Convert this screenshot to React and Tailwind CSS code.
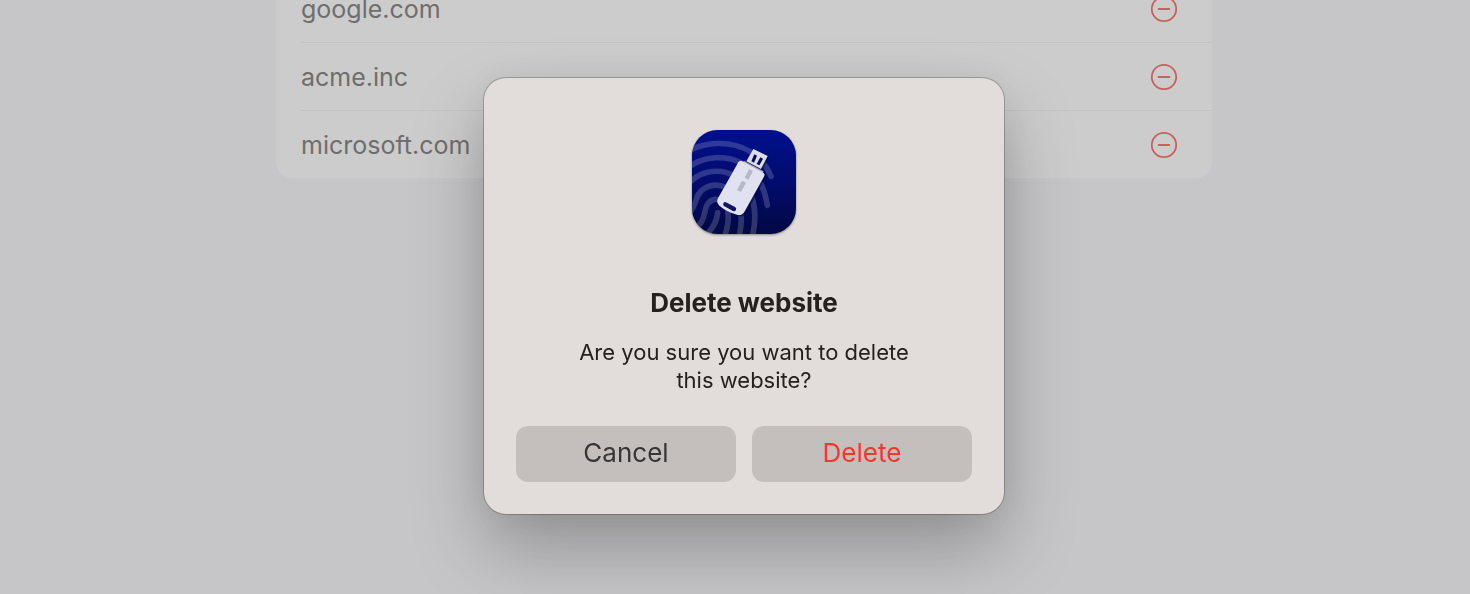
import { useState } from 'react'

const initialSites = ['google.com', 'acme.inc', 'microsoft.com']

function AppIcon() {
  return (
    <svg viewBox="24 24 312 312" className="h-[104px] w-[104px] drop-shadow-[0_1px_1px_rgba(0,0,0,0.4)]" aria-hidden="true">
      <defs>
        <linearGradient id="iconBg" x1="0" y1="0" x2="0" y2="1">
          <stop offset="0" stopColor="#00108c" />
          <stop offset="0.5" stopColor="#010c6e" />
          <stop offset="1" stopColor="#010842" />
        </linearGradient>
        <clipPath id="iconClip">
          <rect x="24" y="24" width="312" height="312" rx="76" />
        </clipPath>
      </defs>

      <g clipPath="url(#iconClip)">
        <rect x="24" y="24" width="312" height="312" fill="url(#iconBg)" />

        {/* fingerprint ridges */}
        <g fill="none" stroke="#fff" strokeOpacity="0.18" strokeWidth="17" strokeLinecap="round">
          <path d="M14 86C76 56 146 58 198 88C228 106 248 132 261 163" />
          <path d="M14 135C62 102 126 98 174 124C220 150 242 198 250 250" />
          <path d="M14 184C54 142 112 138 156 164C206 192 224 262 205 344" />
          <path d="M18 270C40 246 32 216 60 200C92 180 132 190 152 220C176 256 176 300 165 344" />
          <path d="M28 320C72 300 54 262 74 242C92 224 118 232 128 254C138 280 132 312 122 344" />
          <path d="M101 272C99 296 88 316 70 336" />
        </g>

        {/* usb stick */}
        <g transform="translate(4 5)" fill="#000a3c" opacity="0.6">
          <path d="M208 81L251 102L232 136L243 158L181 272Q174 281 161 277L108 250L101 234L169 116L190 113Z" />
        </g>
        <path d="M208 81L251 102L231 141L187 118Z" fill="#dcdde9" />
        <path d="M211 97L219 101L210 122L202 118Z" fill="#050b55" />
        <path d="M229 106L237 110L226 130L218 126Z" fill="#050b55" />
        <path d="M180 116L239 148L236 153L176 122Z" fill="#a6a8bd" />
        <path d="M173 117L238 152Q244 156 241 162L181 270Q174 281 161 279Q124 269 105 250Q96 240 102 229L163 121Q167 114 173 117Z" fill="#e1e2f1" />
        <path d="M195 141L207 147L193 173L182 167Z" fill="#b6b8ca" />
        <path d="M174 176L186 182L171 210L159 204Z" fill="#b6b8ca" />
        <path d="M124 247L150 261" stroke="#12165e" strokeWidth="13" strokeLinecap="round" />
      </g>
    </svg>
  )
}

function MinusCircle() {
  return (
    <svg viewBox="0 0 28 28" className="h-7 w-7" fill="none" stroke="currentColor" strokeWidth="1.8" strokeLinecap="round" aria-hidden="true">
      <circle cx="14" cy="14" r="12.2" />
      <path d="M8.6 14h10.8" />
    </svg>
  )
}

function App() {
  const [sites, setSites] = useState(initialSites)
  const [selected, setSelected] = useState('microsoft.com')

  const handleDelete = () => {
    setSites(sites.filter(s => s !== selected))
    setSelected(null)
  }

  return (
    <div className="min-h-screen overflow-hidden bg-[#c6c6c8] pl-[18px] font-['Inter','Liberation_Sans',sans-serif]">

      {/* WEBSITE LIST */}
      <ul className="mx-auto -mt-[26px] max-w-[936px] rounded-2xl bg-[#cccccc] pl-[25px]">
        {sites.map(site => (
          <li key={site}
            className="flex h-[68px] items-center justify-between border-t border-[#c4c4c4] pr-[34px] first:border-transparent">
            <span className="text-[25px] leading-8 text-[#6e6e6e]">{site}</span>
            <button aria-label={`Delete ${site}`} onClick={() => setSelected(site)} className="text-[#c9605c]">
              <MinusCircle />
            </button>
          </li>
        ))}
      </ul>

      {/* DELETE DIALOG */}
      {selected && (
        <div className="fixed inset-0 flex items-center justify-center pb-0.5 pl-[18px]">
          <div role="alertdialog" aria-modal="true" aria-labelledby="dialog-title" aria-describedby="dialog-text"
            className="flex w-[520px] flex-col items-center rounded-[22px] bg-[#e2ddda] px-8 pt-[52px] pb-8 shadow-[0_0_0_1px_rgba(0,0,0,0.22),0_36px_72px_rgba(0,0,0,0.26),0_0_40px_rgba(0,0,0,0.06)]">
            <AppIcon />
            <h1 id="dialog-title" className="mt-[53px] text-[26px] leading-8 font-bold text-[#26211f]">
              Delete website
            </h1>
            <p id="dialog-text" className="mt-[19px] w-[350px] text-center text-[22px] leading-7 text-[#26211f]">
              Are you sure you want to delete this website?
            </p>
            <div className="mt-8 grid w-full grid-cols-2 gap-4">
              <button onClick={() => setSelected(null)}
                className="h-14 rounded-xl bg-[#c4bfbc] pb-0.5 text-[26px] leading-8 text-[#383635]">
                Cancel
              </button>
              <button onClick={handleDelete}
                className="h-14 rounded-xl bg-[#c4bfbc] pb-0.5 text-[26px] leading-8 text-[#f8352d]">
                Delete
              </button>
            </div>
          </div>
        </div>
      )}

    </div>
  )
}

export default App
